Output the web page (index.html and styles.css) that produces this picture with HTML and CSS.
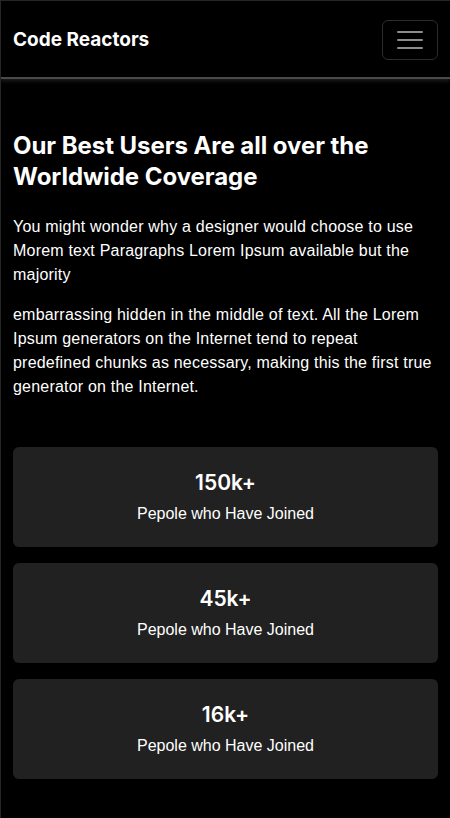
FILE: index.html
```html
<!DOCTYPE html>
<html lang="en">
<head>
<meta charset="utf-8">
<title>Code Reactors</title>
<link rel="stylesheet" href="styles.css">
</head>
<body>
<header class="navbar">
  <a class="brand" href="#">Code Reactors</a>
  <button class="toggler" aria-label="Menu">
    <svg width="30" height="30" viewBox="0 0 30 30"><path d="M3 7h24M3 15h24M3 23h24" stroke="rgba(255,255,255,0.55)" stroke-width="2" stroke-linecap="round" fill="none"/></svg>
  </button>
</header>
<main class="content">
  <h1 class="title">Our Best Users Are all over the Worldwide Coverage</h1>
  <p class="text">You might wonder why a designer would choose to use Morem text Paragraphs Lorem Ipsum available but the majority</p>
  <p class="text">embarrassing hidden in the middle of text. All the Lorem Ipsum generators on the Internet tend to repeat predefined chunks as necessary, making this the first true generator on the Internet.</p>
  <div class="stats">
    <div class="card"><div class="num">150k+</div><div class="label">Pepole who Have Joined</div></div>
    <div class="card"><div class="num">45k+</div><div class="label">Pepole who Have Joined</div></div>
    <div class="card"><div class="num">16k+</div><div class="label">Pepole who Have Joined</div></div>
  </div>
</main>
</body>
</html>
```
FILE: styles.css
```css
* { box-sizing: border-box; }
html { background: #000; }
body {
  margin: 0;
  background: #000;
  color: #fff;
  font-family: Inter, "Noto Sans", sans-serif;
  border-left: 1px solid #262626;
  border-top: 1px solid #262626;
  min-height: 818px;
}
.navbar {
  height: 78px;
  display: flex;
  align-items: center;
  justify-content: space-between;
  padding: 0 12px 0 12px;
  border-bottom: 2px solid #4a4a4a;
  box-shadow: 0 2px 4px rgba(90,90,90,0.35);
}
.brand {
  color: #fff;
  text-decoration: none;
  font-weight: 700;
  font-size: 19px;
  letter-spacing: 0;
  margin-top: 1px;
}
.toggler {
  width: 56px;
  height: 40px;
  background: transparent;
  border: 1px solid #2c2c2c;
  border-radius: 6px;
  display: flex;
  align-items: center;
  justify-content: center;
  padding: 0;
  margin-top: 1px;
}
.content {
  padding: 51px 12px 24px 12px;
}
.title {
  font-size: 24px;
  line-height: 31px;
  font-weight: 700;
  margin: 0 0 23px 0;
  letter-spacing: -0.05px;
}
.text {
  font-family: "Liberation Sans", Arial, sans-serif;
  font-size: 16px;
  line-height: 24px;
  margin: 0 0 16px 0;
  letter-spacing: 0.2px;
}
.stats {
  margin-top: 48px;
  display: flex;
  flex-direction: column;
  gap: 16px;
}
.card {
  background: #212121;
  border-radius: 6px;
  height: 100px;
  display: flex;
  flex-direction: column;
  align-items: center;
  justify-content: center;
  gap: 8px;
}
.num {
  font-size: 21px;
  font-weight: 600;
  line-height: 26px;
}
.label {
  font-family: "Liberation Sans", Arial, sans-serif;
  font-size: 16px;
  line-height: 20px;
}
```
